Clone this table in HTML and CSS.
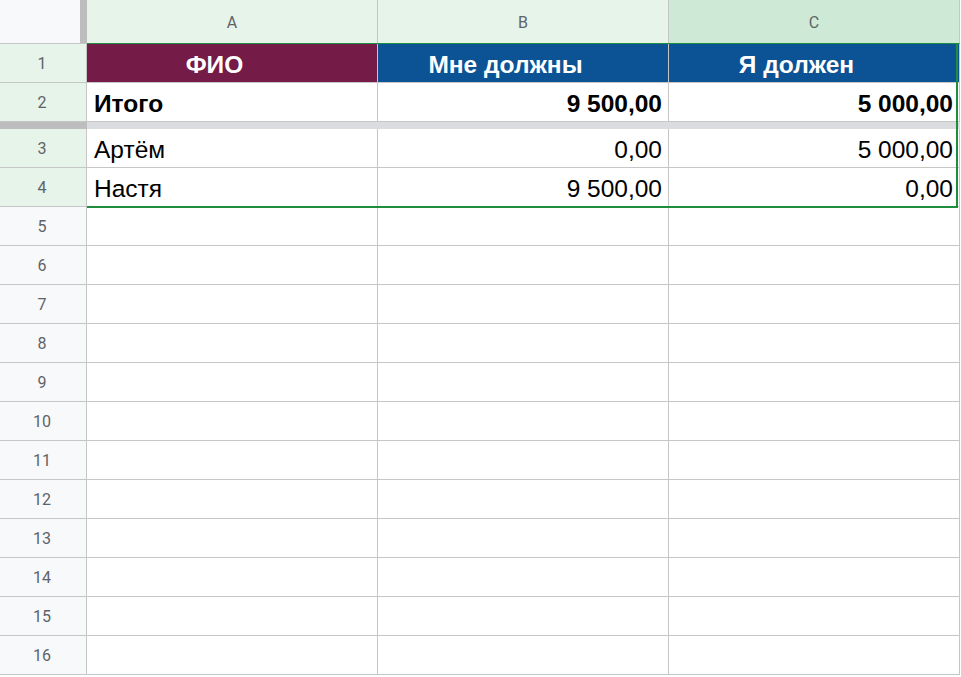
FILE: index.html
```html
<!DOCTYPE html>
<html lang="ru">
<head>
    <meta charset="UTF-8">
    <title>Долги</title>
    <link rel="stylesheet" href="styles.css">
</head>
<body>
    <div class="sheet">
        <div class="grid">
            <!-- column headers -->
            <div class="corner"><span class="corner-bar"></span></div>
            <div class="col-head sel">A</div>
            <div class="col-head sel">B</div>
            <div class="col-head sel active">C</div>

            <!-- frozen rows -->
            <div class="row-head sel">1</div>
            <div class="cell title maroon">ФИО</div>
            <div class="cell title blue">Мне должны</div>
            <div class="cell title blue">Я должен</div>

            <div class="row-head sel">2</div>
            <div class="cell bold">Итого</div>
            <div class="cell bold num">9 500,00</div>
            <div class="cell bold num">5 000,00</div>

            <div class="freeze-head"></div>
            <div class="freeze"></div>

            <div class="row-head sel">3</div>
            <div class="cell">Артём</div>
            <div class="cell num">0,00</div>
            <div class="cell num">5 000,00</div>

            <div class="row-head sel">4</div>
            <div class="cell">Настя</div>
            <div class="cell num">9 500,00</div>
            <div class="cell num">0,00</div>
        </div>
        <div class="grid" id="empty-rows"></div>
        <div class="selection"></div>
    </div>

    <script>
        // empty rows 5..16
        var empty = document.getElementById("empty-rows");
        for (var i = 5; i <= 16; i++) {
            var head = document.createElement("div");
            head.className = "row-head";
            head.textContent = i;
            empty.appendChild(head);
            for (var c = 0; c < 3; c++) {
                var cell = document.createElement("div");
                cell.className = "cell";
                empty.appendChild(cell);
            }
        }
    </script>
</body>
</html>
```

FILE: styles.css
```css
* {
    margin: 0;
    padding: 0;
    box-sizing: border-box;
}

body {
    background: #fff;
    font-family: 'Liberation Sans', Arial, sans-serif;
}

.sheet {
    position: relative;
    width: 961px;
}

.grid {
    display: grid;
    grid-template-columns: 87px 291px 291px 291px;
    grid-auto-rows: 39px;
}

/* headers */
.corner {
    height: 44px;
    background: #f8f9fa;
    border-bottom: 1px solid #c4c7c5;
    display: flex;
    justify-content: flex-end;
}

.corner-bar {
    width: 7px;
    height: 43px;
    background: #bdbdbd;
}

.col-head {
    height: 44px;
    background: #f8f9fa;
    border-right: 1px solid #c4c7c5;
    border-bottom: 1px solid #c4c7c5;
    display: flex;
    align-items: center;
    justify-content: center;
    font-family: Roboto, 'Liberation Sans', sans-serif;
    font-size: 16px;
    color: #5f6368;
    padding-top: 1px;
}

.col-head.sel {
    background: #e6f4ea;
    border-bottom: 1px solid #1e8e3e;
}

.col-head.active {
    background: #ceead6;
}

.row-head {
    background: #f8f9fa;
    border-right: 1px solid #c4c7c5;
    border-bottom: 1px solid #c4c7c5;
    display: flex;
    align-items: center;
    justify-content: center;
    font-family: Roboto, 'Liberation Sans', sans-serif;
    font-size: 16px;
    color: #5f6368;
    padding-right: 2px;
}

.row-head.sel {
    background: #e6f4ea;
}

/* cells */
.cell {
    border-right: 1px solid #c6c6c6;
    border-bottom: 1px solid #c6c6c6;
    display: flex;
    align-items: center;
    padding: 4px 6px 0 7px;
    font-size: 24.5px;
    color: #000;
    white-space: nowrap;
}

.num {
    justify-content: flex-end;
}

.bold {
    font-weight: bold;
}

.title {
    justify-content: center;
    padding-right: 42px;
    font-weight: bold;
    color: #fff;
}

.maroon {
    background: #741b47;
}

.blue {
    background: #0b5394;
}

/* frozen rows divider */
.freeze-head,
.freeze {
    height: 7px;
}

.freeze-head {
    background: #bdbdbd;
}

.freeze {
    grid-column: 2 / 5;
    background: #dadce0;
}

.grid:first-child {
    grid-template-rows: 44px 39px 39px 7px 39px 39px;
}

/* selected range outline */
.selection {
    position: absolute;
    left: 87px;
    top: 43px;
    width: 871px;
    height: 165px;
    border: 2px solid #1e8e3e;
    border-left: none;
    border-top-width: 1px;
    pointer-events: none;
}
```
